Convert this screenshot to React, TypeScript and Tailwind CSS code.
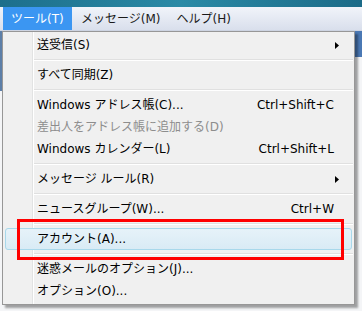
import React from 'react';

type Item =
  | { type: 'item'; label: string; shortcut?: string; sub?: boolean; disabled?: boolean; active?: boolean }
  | { type: 'sep' };

const items: Item[] = [
  { type: 'item', label: '送受信(S)', sub: true },
  { type: 'sep' },
  { type: 'item', label: 'すべて同期(Z)' },
  { type: 'sep' },
  { type: 'item', label: 'Windows アドレス帳(C)...', shortcut: 'Ctrl+Shift+C' },
  { type: 'item', label: '差出人をアドレス帳に追加する(D)', disabled: true },
  { type: 'item', label: 'Windows カレンダー(L)', shortcut: 'Ctrl+Shift+L' },
  { type: 'sep' },
  { type: 'item', label: 'メッセージ ルール(R)', sub: true },
  { type: 'sep' },
  { type: 'item', label: 'ニュースグループ(W)...', shortcut: 'Ctrl+W' },
  { type: 'sep' },
  { type: 'item', label: 'アカウント(A)...', active: true },
  { type: 'sep' },
  { type: 'item', label: '迷惑メールのオプション(J)...' },
  { type: 'item', label: 'オプション(O)...' },
];

const font = { fontFamily: '"DejaVu Sans", "Noto Sans CJK JP", sans-serif' };

const SubArrow = () => (
  <svg width="5" height="7" viewBox="0 0 5 7" className="ml-auto mr-[11px] shrink-0">
    <path d="M0 0 L4 3.5 L0 7 Z" fill="#000" />
  </svg>
);

const MenuRow = ({ it }: { it: Extract<Item, { type: 'item' }> }) => (
  <div
    className={`h-[22px] flex items-center mx-[2px] rounded-[3px] border ${
      it.active ? 'border-[#a8d8eb] bg-gradient-to-b from-[#e6f2f9] to-[#d9ebf5]' : 'border-transparent'
    }`}
  >
    <span className={`pl-[31px] ${it.disabled ? 'text-[#8d8d8d]' : 'text-black'}`}>{it.label}</span>
    {it.shortcut && <span className="ml-auto pr-[17px] text-black">{it.shortcut}</span>}
    {it.sub && <SubArrow />}
  </div>
);

export default function App() {
  return (
    <div className="relative w-[362px] h-[311px] overflow-hidden bg-[#f4f5f7] text-[12px]" style={font}>
      {/* title bar strip */}
      <div className="h-[7px] bg-gradient-to-r from-[#1d6f8c] via-[#2a8aa6] to-[#1b6b88]" />
      {/* menu bar */}
      <div className="h-[24px] flex items-center bg-gradient-to-b from-[#f1f4fa] to-[#d9dfec] border-b border-[#cdd4e2]">
        <div className="ml-[3px] h-full w-[69px] bg-[#3b96f2] text-white flex items-center pl-[8px]">ツール(T)</div>
        <div className="ml-[9px] text-[#1a1a1a]">メッセージ(M)</div>
        <div className="ml-[16px] text-[#1a1a1a]">ヘルプ(H)</div>
      </div>

      {/* window content behind the menu */}
      <div className="flex justify-between">
        <div className="w-[3px] h-[60px] bg-[#5d7fa8]" />
        <div className="w-[8px] h-[26px] bg-[#4a78b4]" />
      </div>

      {/* dropdown */}
      <div className="absolute left-[2px] top-[31px] w-[353px] border border-[#979797] shadow-[3px_3px_2px_rgba(0,0,0,0.35)] py-[2px] bg-[linear-gradient(to_right,#f0f0f0_29px,#e2e3e3_29px,#e2e3e3_30px,#ffffff_30px,#ffffff_31px,#f0f0f0_31px)]">
        {items.map((it, i) =>
          it.type === 'sep' ? (
            <div key={i} className="h-[8px] flex flex-col justify-center pl-[31px] pr-[1px]">
              <div className="h-px bg-[#e0e0e0]" />
              <div className="h-px bg-white" />
            </div>
          ) : (
            <MenuRow key={i} it={it} />
          )
        )}
      </div>

      {/* annotation box */}
      <div className="absolute left-[17px] top-[219px] w-[327px] h-[41px] border-[3px] border-[#ff0000]" />
    </div>
  );
}
